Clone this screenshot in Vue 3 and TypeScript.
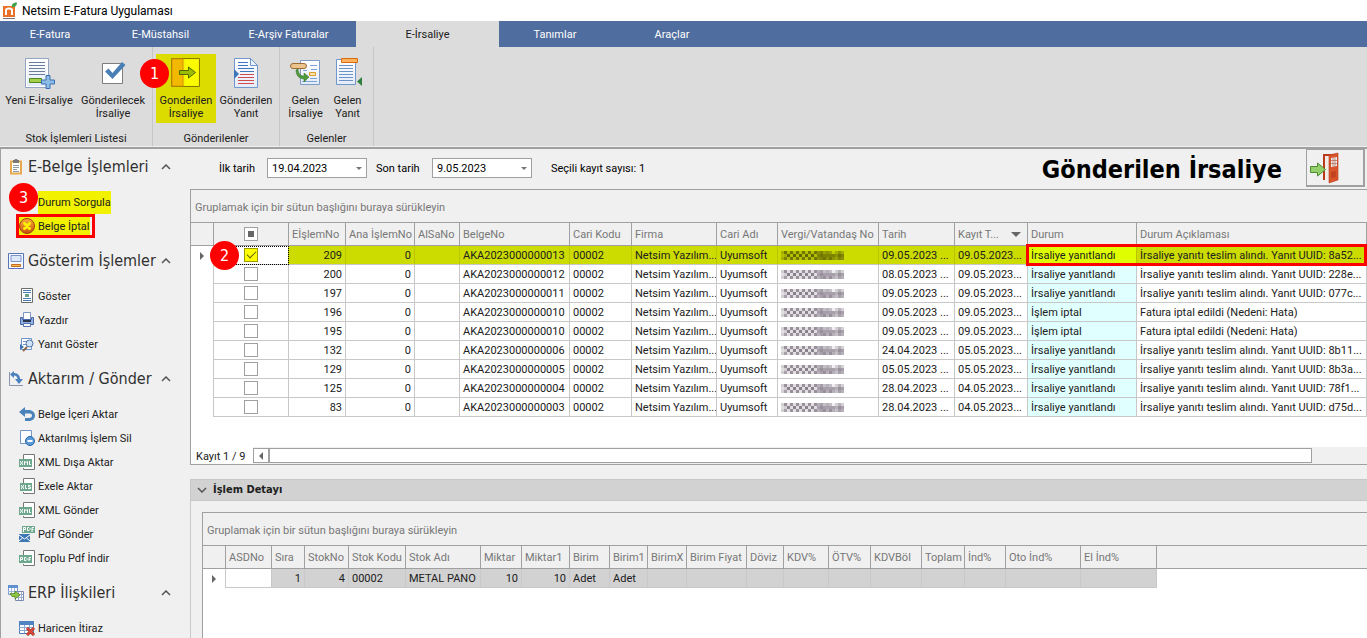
<script setup lang="ts">
import { ref } from 'vue'

interface RibbonItem { icon: string; lines: string[]; hot?: boolean }
interface RibbonGroup { title: string; cls: string; items: RibbonItem[] }
interface NavItem { icon: string; label: string; cls?: string }
interface NavGroup { icon: string; title: string; items: NavItem[] }
interface Doc {
  no: number; belge: string; tarih: string; kayit: string; durum: string; aciklama: string
}

const tabs = ['E-Fatura', 'E-Müstahsil', 'E-Arşiv Faturalar', 'E-İrsaliye', 'Tanımlar', 'Araçlar']
const activeTab = ref('E-İrsaliye')

const ribbon: RibbonGroup[] = [
  { title: 'Stok İşlemleri Listesi', cls: 'g1', items: [
    { icon: 'i-new', lines: ['Yeni E-İrsaliye'] },
    { icon: 'i-check', lines: ['Gönderilecek', 'İrsaliye'] },
  ] },
  { title: 'Gönderilenler', cls: 'g2', items: [
    { icon: 'i-sent', lines: ['Gonderilen', 'İrsaliye'], hot: true },
    { icon: 'i-reply', lines: ['Gönderilen', 'Yanıt'] },
  ] },
  { title: 'Gelenler', cls: 'g3', items: [
    { icon: 'i-inbox', lines: ['Gelen', 'İrsaliye'] },
    { icon: 'i-inreply', lines: ['Gelen', 'Yanıt'] },
  ] },
]

const nav: NavGroup[] = [
  { icon: 'n-clip', title: 'E-Belge İşlemleri', items: [
    { icon: 'n-blank', label: 'Durum Sorgula', cls: 'query' },
    { icon: 'n-cancel', label: 'Belge İptal', cls: 'cancel' },
  ] },
  { icon: 'n-screen', title: 'Gösterim İşlemler', items: [
    { icon: 'n-show', label: 'Göster' },
    { icon: 'n-print', label: 'Yazdır' },
    { icon: 'n-find', label: 'Yanıt Göster' },
  ] },
  { icon: 'n-transfer', title: 'Aktarım / Gönder', items: [
    { icon: 'n-undo', label: 'Belge İçeri Aktar' },
    { icon: 'n-remove', label: 'Aktarılmış İşlem Sil' },
    { icon: 'n-xml', label: 'XML Dışa Aktar' },
    { icon: 'n-xls', label: 'Exele Aktar' },
    { icon: 'n-xml', label: 'XML Gönder' },
    { icon: 'n-pdfmail', label: 'Pdf Gönder' },
    { icon: 'n-pdf', label: 'Toplu Pdf İndir' },
  ] },
  { icon: 'n-erp', title: 'ERP İlişkileri', items: [
    { icon: 'n-objection', label: 'Haricen İtiraz' },
  ] },
]

const yanit = 'İrsaliye yanıtlandı'
const teslim = (id: string) => `İrsaliye yanıtı teslim alındı. Yanıt UUID: ${id}...`
const hata = 'Fatura iptal edildi (Nedeni: Hata)'
const docs: Doc[] = [
  { no: 209, belge: 'AKA2023000000013', tarih: '09.05.2023 ...', kayit: '09.05.2023...', durum: yanit, aciklama: teslim('8a52') },
  { no: 200, belge: 'AKA2023000000012', tarih: '08.05.2023 ...', kayit: '09.05.2023...', durum: yanit, aciklama: teslim('228e') },
  { no: 197, belge: 'AKA2023000000011', tarih: '09.05.2023 ...', kayit: '09.05.2023...', durum: yanit, aciklama: teslim('077c') },
  { no: 196, belge: 'AKA2023000000010', tarih: '09.05.2023 ...', kayit: '09.05.2023...', durum: 'İşlem iptal', aciklama: hata },
  { no: 195, belge: 'AKA2023000000010', tarih: '09.05.2023 ...', kayit: '09.05.2023...', durum: 'İşlem iptal', aciklama: hata },
  { no: 132, belge: 'AKA2023000000006', tarih: '24.04.2023 ...', kayit: '05.05.2023...', durum: yanit, aciklama: teslim('8b11') },
  { no: 129, belge: 'AKA2023000000005', tarih: '05.05.2023 ...', kayit: '05.05.2023...', durum: yanit, aciklama: teslim('8b3a') },
  { no: 125, belge: 'AKA2023000000004', tarih: '28.04.2023 ...', kayit: '04.05.2023...', durum: yanit, aciklama: teslim('78f1') },
  { no: 83, belge: 'AKA2023000000003', tarih: '28.04.2023 ...', kayit: '04.05.2023...', durum: yanit, aciklama: teslim('d75d') },
]
const checked = ref<number[]>([209])

/* Censored tax number: three rows of cells, each digit a darkness from 0 to 9. */
const mosaic = ['372727272727564541353', '238282828282676666576', '362727272727567575465']
const cells = mosaic.flatMap((row, y) =>
  row.split('').map((c, x) => ({ x: x * 3, y: y * 3, o: Number(c) / 10 })))

const detailCols: { name: string; w: number; value?: string; num?: boolean }[] = [
  { name: 'ASDNo', w: 46 }, { name: 'Sıra', w: 33, value: '1', num: true },
  { name: 'StokNo', w: 44, value: '4', num: true }, { name: 'Stok Kodu', w: 57, value: '00002' },
  { name: 'Stok Adı', w: 75, value: 'METAL PANO' }, { name: 'Miktar', w: 41, value: '10', num: true },
  { name: 'Miktar1', w: 48, value: '10', num: true }, { name: 'Birim', w: 40, value: 'Adet' },
  { name: 'Birim1', w: 38, value: 'Adet' }, { name: 'BirimX', w: 39 }, { name: 'Birim Fiyat', w: 60 },
  { name: 'Döviz', w: 37 }, { name: 'KDV%', w: 45 }, { name: 'ÖTV%', w: 42 }, { name: 'KDVBöl', w: 51 },
  { name: 'Toplam', w: 43 }, { name: 'İnd%', w: 41 }, { name: 'Oto İnd%', w: 75 }, { name: 'El İnd%', w: 76 },
]
</script>

<template>
  <div class="app">
    <svg class="sprite" aria-hidden="true">
      <defs>
        <linearGradient id="paper" x1="0" y1="0" x2="0" y2="1"><stop offset="0" stop-color="#fff" /><stop offset="1" stop-color="#e3ebf8" /></linearGradient>
        <linearGradient id="orange" x1="0" y1="0" x2="0" y2="1"><stop offset="0" stop-color="#f7b03a" /><stop offset="1" stop-color="#c94f10" /></linearGradient>
      </defs>
      <symbol id="i-new" viewBox="0 0 32 32">
        <path d="M2.500 1.500h23v29h-23z" fill="#fff" stroke="#93a5c2" /><path d="M4 3h20v26H4z" fill="url(#paper)" />
        <path d="M6 5.500h16M6 8.500h16M6 11.500h16M6 14.500h16M6 17.500h16" stroke="#6d7d9c" />
        <path d="M6.500 21.500h12v4h-12z" fill="#a5cf4a" stroke="#4f8a22" />
        <path d="M23 18.500h4v4.500h4.500v4H27v4.500h-4V27h-4.500v-4H23z" fill="#8cbbe6" stroke="#3a71b0" />
      </symbol>
      <symbol id="i-check" viewBox="0 0 32 32">
        <path d="M5.500 6.500h20v20h-20z" fill="#fff" stroke="#7d7d7d" />
        <path d="M8 14.500l3.500-3 4 4.500L25 5l3.500 3L15.500 22z" fill="#4a7fb5" />
      </symbol>
      <symbol id="i-sent" viewBox="0 0 32 32">
        <path d="M1.500 1.500h28v28h-28z" fill="#f4f400" stroke="#8a7a00" />
        <path d="M2 2h11v27H2z" fill="#f3b800" stroke="#d79000" /><path d="M15 3h13v25H15z" fill="#fafa00" />
        <path d="M9.500 13.500h9V10l7 5.500-7 5.500v-3.500h-9z" fill="#9dbb00" stroke="#4d6a00" />
      </symbol>
      <symbol id="i-reply" viewBox="0 0 32 32">
        <path d="M4.500 1.500h16l7 7v22h-23z" fill="url(#paper)" stroke="#6f97cc" /><path d="M20.500 1.500v7h7z" fill="#e8f1fd" stroke="#6f97cc" />
        <path d="M8 5.500h10M8 8.500h10M8 11.500h16M10 14.500h14" stroke="#3f76bd" />
        <path d="M10 17.500h14M8 20.500h16M8 23.500h16M8 26.500h16" stroke="#d04a4a" /><path d="M4 12l5 5-5 5z" fill="#3c76b6" />
      </symbol>
      <symbol id="i-inbox" viewBox="0 0 32 32">
        <path d="M10.500 3.500h19v24h-19z" fill="url(#paper)" stroke="#7f9cc9" />
        <path d="M20 8.500h7M13 13.500h4M21 12.500h6M20 21.500h7M12 24.500h15" stroke="#7ba2d2" />
        <path d="M19.500 15.500h6v3h-6z" fill="#ffe5ae" stroke="#e0992b" />
        <rect x="0.500" y="6.500" width="16" height="5" rx="2.500" fill="#eac48c" stroke="#9c6c32" />
        <path d="M8 12c0 5 3 7 6 7v-3l5 4-5 5v-3c-5 0-8-4-8-9z" fill="#4f9a3c" stroke="#2d6a24" stroke-width=".5" />
      </symbol>
      <symbol id="i-inreply" viewBox="0 0 32 32">
        <path d="M4.500 2.500h19v25h-19z" fill="url(#paper)" stroke="#6f97cc" />
        <path d="M7 8.500h14M7 11.500h14M7 14.500h14M7 17.500h14M7 20.500h14M7 23.500h14" stroke="#6b93c6" />
        <path d="M9.500 1.500h16v4h-16z" fill="#fbb25c" stroke="#d86a10" /><path d="M30 20v9l-5-4.500z" fill="#2f8040" />
      </symbol>
      <symbol id="n-blank" viewBox="0 0 16 16"><circle cx="8" cy="8" r="5" fill="#c9c900" /></symbol>
      <symbol id="n-clip" viewBox="0 0 16 16">
        <path d="M3 2.500h10v12H3z" fill="#fff" stroke="#e7a950" stroke-width="2" /><path d="M5 1h1.500l.5-1h2l.5 1H11v3H5z" fill="#777" />
        <path d="M5 6.500h6M5 8.500h6M5 10.500h4M5 12.500h6" stroke="#8b99a8" />
      </symbol>
      <symbol id="n-cancel" viewBox="0 0 16 16">
        <circle cx="8" cy="8" r="7.500" fill="url(#orange)" stroke="#a83c08" />
        <path d="M5.500 5.500l5 5M10.500 5.500l-5 5" stroke="#fff200" stroke-width="3" stroke-linecap="round" />
      </symbol>
      <symbol id="n-screen" viewBox="0 0 16 16">
        <path d="M.500.500h15v15H.500z" fill="#f4f7ff" stroke="#5a74b8" /><path d="M3 2.500h10v6H3z" fill="#dde9fb" stroke="#7b94c9" />
        <path d="M3.500 11.500h9v2h-9z" fill="#f5b75c" stroke="#c66d1b" />
      </symbol>
      <symbol id="n-show" viewBox="0 0 16 16">
        <path d="M2.500.500h11v14h-11z" fill="#fff" stroke="#6d6d6d" />
        <path d="M4 2.500h8M4 4.500h8M4 12.500h8M4 10.500h8" stroke="#4a7fb5" /><path d="M6 6h4v3H6z" fill="#6ba38a" />
      </symbol>
      <symbol id="n-print" viewBox="0 0 16 16">
        <path d="M4.500.500h7v7h-7z" fill="#fff" stroke="#7f95bf" /><path d="M1.500 5.500h2v2h9v-2h2v7h-13z" fill="#8fb0e0" stroke="#4a67a6" />
        <path d="M4 8h8v2H4z" fill="#29344e" /><path d="M4.500 11.500h7v3h-7z" fill="#fff" stroke="#5774b2" />
      </symbol>
      <symbol id="n-find" viewBox="0 0 16 16">
        <path d="M2.500 2.500h10v11h-10z" fill="#fff" stroke="#6a95cc" /><path d="M4 5.500h4M4 8.500h3" stroke="#6a95cc" /><path d="M1 8l4 3-4 3z" fill="#3c76b6" />
        <path d="M8 11l-4 4" stroke="#856344" stroke-width="2" /><circle cx="10.500" cy="7.500" r="3.500" fill="#cfe4fa" stroke="#50719b" />
      </symbol>
      <symbol id="n-transfer" viewBox="0 0 16 16">
        <path d="M1.500 1v13.500H15" fill="none" stroke="#8795ad" /><path d="M6 0v2c4 0 6 3 6 6h3l-4 5-4-5h2.500c0-2-1.500-3.500-3.500-3.500V7L2 3.500z" fill="#4a80bd" />
      </symbol>
      <symbol id="n-undo" viewBox="0 0 16 16">
        <path d="M0 6l6-5v3h3.500C13.500 4 16 6.500 16 9.500S13.500 15 10 15H6v-3h4c2 0 3-1 3-2.500S12 7.500 9.500 7.500H6V11z" fill="#4a83bb" />
      </symbol>
      <symbol id="n-remove" viewBox="0 0 16 16">
        <path d="M1.500.500h11v13h-11z" fill="#fafcff" stroke="#7495c8" /><circle cx="11" cy="11" r="4.500" fill="#5a9ad8" stroke="#2d66a3" /><path d="M8.500 11h5" stroke="#fff" stroke-width="2" />
      </symbol>
      <symbol id="n-xml" viewBox="0 0 16 16">
        <path d="M4.500 5V.500h11v15h-11V14" fill="#fff" stroke="#777" /><path d="M0 5h13v8H0z" fill="#6ca78e" />
        <path d="M1.500 7v1l2 2v1M3.500 7v1l-2 2v1M5.500 11V7.500l1.500 1 1.500-1V11M10.500 7v3.500H12" fill="none" stroke="#fff" />
      </symbol>
      <symbol id="n-xls" viewBox="0 0 16 16">
        <path d="M4.500 5V.500h11v15h-11V14" fill="#fff" stroke="#777" /><path d="M1 5h12v8H1z" fill="#6ca78e" />
        <path d="M2.500 7v1l2 2v1M4.500 7v1l-2 2v1M6.500 7v3.500H8M11.500 7.500H9.500V9h2v1.500H9" fill="none" stroke="#fff" />
      </symbol>
      <symbol id="n-pdf" viewBox="0 0 16 16">
        <path d="M4.500 5V.500h11v15h-11V14" fill="#fff" stroke="#777" /><path d="M0 5h13v8H0z" fill="#6ca78e" />
        <path d="M1.500 11V7.500h2v2h-2M5.500 7.500H7l1 1v1l-1 1H5.500zM10 11V7.500h2M10 9.500h1.500" fill="none" stroke="#fff" />
      </symbol>
      <symbol id="n-pdfmail" viewBox="0 0 16 16">
        <path d="M3 0h13v7H3z" fill="#6ca78e" /><path d="M4.500 6V1.500h2v2h-2M8.500 1.500H10l1 1v1l-1 1H8.500zM13 6V1.500h2M13 3.500h1.500" fill="none" stroke="#fff" />
        <path d="M0 8h11v8H0z" fill="#3f77b4" /><path d="M0 9l5.500 4L11 9M0 15l3.500-3M11 15l-3.500-3" fill="none" stroke="#fff" />
      </symbol>
      <symbol id="n-erp" viewBox="0 0 16 16">
        <path d="M.500.500h9v9h-9z" fill="#fff" stroke="#7a9bd0" /><path d="M0 0h10v3H0z" fill="#5f90cf" /><path d="M3.500 3v7M6.500 3v7M0 6.500h10" stroke="#9bb5de" />
        <path d="M7.500 6.500h8v9h-8z" fill="#fff" stroke="#7a89b0" /><path d="M10.500 7v8M13.500 7v8M8 9.500h7M8 12.500h7" stroke="#9bacd0" />
        <path d="M2 8.500h5V6l5 4-5 4v-2.500H4z" fill="#8dc63f" stroke="#4a7f1d" stroke-width=".7" />
      </symbol>
      <symbol id="n-objection" viewBox="0 0 16 16">
        <path d="M.500 1.500h14v12H.500z" fill="#fff" stroke="#4a79b5" /><path d="M0 1h15v4H0z" fill="#4f83c2" /><path d="M0 7.500h15M0 10.500h15M5.500 5v8M10.500 5v8" stroke="#87a9d4" />
        <path d="M8 8l7 7M15 8l-7 7" stroke="#a8281c" stroke-width="3" /><path d="M8 8l7 7M15 8l-7 7" stroke="#e0503c" stroke-width="1.500" />
      </symbol>
    </svg>

    <header class="titlebar">
      <svg class="logo" viewBox="0 0 15 18" aria-hidden="true">
        <path d="M1 4h12v11H1z" fill="#ea7125" /><path d="M4 13V8c0-2 6-2 6 0v5" fill="none" stroke="#fff" stroke-width="2" />
        <path d="M10 5c-.5-3 1-4.500 5-4.500 0 3-1.500 5-5 4.500z" fill="#3fa34d" /><path d="M1 16.500h12" stroke="#777" />
      </svg>
      <span>Netsim E-Fatura Uygulaması</span>
    </header>

    <nav class="tabs">
      <button v-for="t in tabs" :key="t" type="button" :class="{ active: t === activeTab }" @click="activeTab = t">{{ t }}</button>
    </nav>

    <div class="ribbon">
      <section v-for="g in ribbon" :key="g.title" class="rgroup" :class="g.cls">
        <div class="ritems">
          <button v-for="it in g.items" :key="it.icon" type="button" class="ritem" :class="{ hot: it.hot }">
            <svg class="ricon" aria-hidden="true"><use :href="'#' + it.icon" /></svg>
            <span v-for="l in it.lines" :key="l">{{ l }}</span>
            <span v-if="it.hot" class="badge b1">1</span>
          </button>
        </div>
        <h2>{{ g.title }}</h2>
      </section>
    </div>

    <div class="body">
      <aside class="side">
        <section v-for="g in nav" :key="g.title">
          <button type="button" class="shead">
            <svg class="nicon" aria-hidden="true"><use :href="'#' + g.icon" /></svg>
            <span>{{ g.title }}</span>
            <svg class="chev" viewBox="0 0 10 6" aria-hidden="true"><path d="M1 5l4-4 4 4" /></svg>
          </button>
          <ul>
            <li v-for="it in g.items" :key="it.label" :class="it.cls">
              <a href="#"><svg class="nicon" aria-hidden="true"><use :href="'#' + it.icon" /></svg><span>{{ it.label }}</span></a>
              <span v-if="it.cls === 'query'" class="badge b3">3</span>
            </li>
          </ul>
        </section>
      </aside>

      <main class="main">
        <div class="filter">
          <label for="d1">İlk tarih</label>
          <span class="date"><input id="d1" type="text" value="19.04.2023" /><button type="button" aria-label="İlk tarih seç"></button></span>
          <label for="d2">Son tarih</label>
          <span class="date"><input id="d2" type="text" value="9.05.2023" /><button type="button" aria-label="Son tarih seç"></button></span>
          <span class="count">Seçili kayıt sayısı: 1</span>
          <h1>Gönderilen İrsaliye</h1>
          <button type="button" class="exit" aria-label="Çıkış">
            <svg viewBox="0 0 32 32" aria-hidden="true">
              <path d="M13 2h14v26H13z" fill="#b9391b" /><path d="M15 4h6v24h-6z" fill="#f4ebe7" />
              <path d="M19 3l9-2v27l-9 3z" fill="#d9532b" stroke="#b13c1a" stroke-width=".6" /><path d="M21 6l6-1v9l-6 1z" fill="#e9eef2" />
              <path d="M23 5.500v9M25 5.500v9M21 8.500h6M21 11.500h6" stroke="#b9654b" stroke-width=".7" /><path d="M21 20l5-1v6l-5 1.500z" fill="#c2431f" />
              <path d="M.500 14.500h7V11l8 6.500-8 6.500v-3.500h-7z" fill="#93cf6a" stroke="#4d8a32" />
            </svg>
          </button>
        </div>

        <section class="grid">
          <p class="group">Gruplamak için bir sütun başlığını buraya sürükleyin</p>
          <div class="tbl">
            <table>
              <colgroup>
                <col class="w23" /><col class="w75" /><col class="w57" /><col class="w69" /><col class="w45" /><col class="w110" /><col class="w62" />
                <col class="w85" /><col class="w61" /><col class="w101" /><col class="w76" /><col class="w73" /><col class="w109" /><col />
              </colgroup>
              <thead>
                <tr>
                  <th></th>
                  <th class="c"><input type="checkbox" class="partial" aria-label="Tümünü seç" /></th>
                  <th>EİşlemNo</th><th>Ana İşlemNo</th><th>AlSaNo</th><th>BelgeNo</th><th>Cari Kodu</th><th>Firma</th><th>Cari Adı</th>
                  <th>Vergi/Vatandaş No</th><th>Tarih</th><th><span class="sorted">Kayıt T...<i></i></span></th><th>Durum</th><th>Durum Açıklaması</th>
                </tr>
              </thead>
              <tbody>
                <tr v-for="(d, i) in docs" :key="d.no" :class="{ sel: i === 0 }">
                  <td class="ind"><i v-if="i === 0" class="ptr"></i></td>
                  <td class="c chk"><input v-model="checked" type="checkbox" :value="d.no" :aria-label="'Kayıt ' + d.no" /><span v-if="i === 0" class="badge b2">2</span></td>
                  <td class="r">{{ d.no }}</td><td class="r">0</td><td></td><td>{{ d.belge }}</td><td>00002</td><td>Netsim Yazılım...</td><td>Uyumsoft</td>
                  <td class="tax">
                    <svg viewBox="0 0 63 9" aria-hidden="true"><rect v-for="(c, k) in cells" :key="k" :x="c.x" :y="c.y" width="3" height="3" :opacity="c.o" /></svg>
                  </td>
                  <td>{{ d.tarih }}</td><td>{{ d.kayit }}</td><td class="durum">{{ d.durum }}</td><td class="desc">{{ d.aciklama }}</td>
                </tr>
              </tbody>
            </table>
          </div>
          <footer class="foot">
            <span>Kayıt 1 / 9</span>
            <div class="scroll"><button type="button" aria-label="Sola kaydır"></button><div class="thumb"></div></div>
          </footer>
        </section>

        <section class="detail">
          <button type="button" class="dhead">
            <svg class="chev" viewBox="0 0 10 6" aria-hidden="true"><path d="M1 1l4 4 4-4" /></svg>İşlem Detayı
          </button>
          <div class="dgrid">
            <p class="group">Gruplamak için bir sütun başlığını buraya sürükleyin</p>
            <div class="dstrip">
              <table>
                <thead>
                  <tr><th class="w23"></th><th v-for="c in detailCols" :key="c.name" :style="{ width: c.w + 'px' }">{{ c.name }}</th></tr>
                </thead>
                <tbody>
                  <tr><td class="ind"><i class="ptr"></i></td><td v-for="c in detailCols" :key="c.name" :class="{ r: c.num }">{{ c.value }}</td></tr>
                </tbody>
              </table>
            </div>
          </div>
        </section>
      </main>
    </div>
  </div>
</template>

<style>
body { margin: 0; }
</style>

<style scoped>
.app {
  height: 100vh; overflow: hidden; display: flex; flex-direction: column; background: #f0f0f0; color: #202020;
  font: 11px/13px Roboto, "Noto Sans", sans-serif;
}
.app * { box-sizing: border-box; }
button, input { font: inherit; color: inherit; margin: 0; padding: 0; border: 0; background: none; }
h1, h2, p, ul { margin: 0; padding: 0; font-weight: normal; }
.sprite { position: absolute; width: 0; height: 0; }

.titlebar { height: 21px; flex: none; display: flex; align-items: center; gap: 5px; padding-left: 2px; background: #fff; color: #000; font: 12px/20px Roboto, "Noto Sans", sans-serif; }
.logo { width: 15px; height: 18px; }

.tabs { height: 26px; flex: none; display: grid; grid-template-columns: 100px 121px 135px 143px 112px 122px; background: #4f6d9e; color: #fff; }
.tabs .active { background: #dcdcdc; color: #202020; }

.ribbon { height: 100px; flex: none; display: flex; background: #dcdcdc; border-bottom: 1px solid #f0f0f0; }
.rgroup { display: flex; flex-direction: column; border-right: 1px solid #c6c6c6; }
.g1 { width: 153px; }
.g2 { width: 127px; }
.g3 { width: 94px; }
.ritems { flex: 1; display: flex; justify-content: center; padding-top: 7px; }
.ritem { position: relative; display: flex; flex-direction: column; align-items: center; height: 69px; padding: 3px 4px 0; white-space: nowrap; }
.g1 .ritem { width: 74px; }
.g2 .ritem { width: 60px; }
.g3 .ritem { width: 42px; }
.ritem.hot { background: #dcdc00; }
.ricon { width: 32px; height: 32px; margin-bottom: 5px; flex: none; }
.rgroup h2 { height: 16px; font-size: 11px; line-height: 17px; text-align: center; }

.badge { position: absolute; z-index: 2; width: 29px; height: 29px; border-radius: 50%; background: #f00; color: #fff; font: 16px/29px "DejaVu Sans Condensed", sans-serif; text-align: center; }
.b1 { left: -16px; top: 5px; }
.b2 { left: -4px; top: -5px; }
.b3 { left: 8px; top: -7px; }

.body { flex: 1; min-height: 0; display: flex; border-top: 2px solid #a0a0a0; border-left: 1px solid #a0a0a0; }
.side { width: 189px; flex: none; padding-top: 6px; }
.shead { width: 100%; height: 24px; display: flex; align-items: center; padding-left: 7px; text-align: left; font: 16px/24px "DejaVu Sans Condensed", sans-serif; color: #303030; }
.shead span { width: 129px; margin: 0 4px; white-space: nowrap; }
.nicon { width: 16px; height: 16px; flex: none; }
.chev { width: 10px; height: 6px; flex: none; fill: none; stroke: #555; stroke-width: 1.500; }
.side ul { list-style: none; padding: 11px 0; }
.side li { position: relative; height: 24px; padding-left: 18px; display: flex; align-items: center; }
.side a { display: flex; align-items: center; gap: 3px; height: 22px; color: inherit; text-decoration: none; }
.query a span { height: 23px; line-height: 23px; background: #f2f200; }
.side .cancel { padding-left: 15px; }
.cancel a { height: 24px; border: 3px solid #f00; padding-right: 2px; background: #f2f200; background-clip: content-box; }

.main { flex: 1; min-width: 0; display: flex; flex-direction: column; }
.filter { height: 40px; flex: none; display: flex; align-items: center; padding: 0 2px 2px 29px; color: #000; }
.filter label { width: 48px; }
.date + label { width: 56px; margin-left: 9px; }
.date { width: 100px; height: 20px; display: flex; align-items: center; background: #fff; border: 1px solid #a0a0a0; }
.date input { flex: 1; min-width: 0; padding-left: 4px; outline: 0; }
.date button { width: 15px; height: 18px; display: grid; place-items: center; }
.date button::after { content: ""; border: 3px solid transparent; border-top-color: #777; border-bottom: 0; }
.count { margin-left: 19px; }
.filter h1 { margin-left: auto; padding-top: 4px; font: bold 25px/34px "DejaVu Sans Condensed", sans-serif; }
.exit { width: 59px; height: 38px; margin-left: 24px; border: 1px solid #a0a0a0; border-bottom-width: 2px; border-right-width: 2px; text-align: left; }
.exit svg { display: block; width: 32px; height: 32px; margin-left: 3px; }

.grid { height: 276px; flex: none; display: flex; flex-direction: column; border: 1px solid #a0a0a0; border-right: 0; background: #fff; }
.group { height: 33px; padding: 0 4px; background: #f0f0f0; border-bottom: 1px solid #a0a0a0; color: #777; line-height: 35px; }
table { border-collapse: separate; border-spacing: 0; table-layout: fixed; }
.tbl { flex: 1; }
.tbl table { width: 100%; }
.w23 { width: 23px; } .w45 { width: 45px; } .w57 { width: 57px; } .w61 { width: 61px; } .w62 { width: 62px; } .w69 { width: 69px; }
.w73 { width: 73px; } .w75 { width: 75px; } .w76 { width: 76px; } .w85 { width: 85px; } .w101 { width: 101px; } .w109 { width: 109px; } .w110 { width: 110px; }
th, td { padding: 0 0 0 3px; overflow: hidden; white-space: nowrap; text-align: left; font-weight: normal; }
th { height: 23px; background: #f0f0f0; color: #777; border-right: 1px solid #a0a0a0; border-bottom: 1px solid #a0a0a0; }
td { height: 19px; border-right: 1px solid #c8c8c8; border-bottom: 1px solid #c8c8c8; }
.c { padding: 0; text-align: center; }
.r { padding-right: 3px; text-align: right; }
.ind { border-bottom: 0; padding: 0; }
.ptr { display: block; width: 0; margin-left: 9px; border: 4px solid transparent; border-left-color: #666; border-right: 0; }
.sorted { display: flex; align-items: center; justify-content: space-between; padding-right: 6px; }
.sorted i { border: 5px solid transparent; border-top-color: #666; border-bottom: 0; }
input[type="checkbox"] { appearance: none; display: inline-grid; place-items: center; width: 14px; height: 14px; border: 1px solid #a0a0a0; background: #fff; vertical-align: middle; }
.partial::after { content: ""; width: 6px; height: 6px; background: #666; }
input[type="checkbox"]:checked { background: #ff0; border-color: #9a9a00; }
input[type="checkbox"]:checked::after { content: ""; width: 8px; height: 4px; margin-bottom: 3px; border-left: 1px solid #606000; border-bottom: 1px solid #606000; rotate: -45deg; }
.durum { background: #e0ffff; }
.tax svg { display: block; width: 63px; height: 9px; fill: #6d6172; }
.sel td { background: #cddc00; border-right-color: #b9c600; }
.sel .ind { background: #fff; border-color: #fff; }
.sel td.chk { position: relative; overflow: visible; background: #fff; outline: 1px dotted #000; outline-offset: -1px; }
.sel .tax svg { fill: #4a4a00; }
.sel .durum { background: #dfff00; }
.sel .durum, .sel .desc { position: relative; overflow: visible; }
.sel .durum::after, .sel .desc::after { content: ""; position: absolute; inset: -2px -1px -2px -2px; border: 3px solid #f00; border-right: 0; }
.sel .desc::after { left: 0; border-right: 3px solid #f00; border-left: 0; }

.foot { height: 17px; flex: none; display: flex; align-items: center; }
.foot span { width: 62px; padding: 1px 0 0 5px; }
.scroll { flex: 1; height: 17px; padding: 1px 55px 1px 0; display: flex; background: #f0f0f0; }
.scroll button { width: 16px; display: grid; place-items: center; background: #fff; border: 1px solid #a0a0a0; }
.scroll button::after { content: ""; border: 4px solid transparent; border-right-color: #666; border-left: 0; }
.thumb { flex: 1; background: #fff; border: 1px solid #a0a0a0; }

.detail { flex: 1; min-height: 0; margin-top: 14px; display: flex; flex-direction: column; border-left: 1px solid #c8c8c8; }
.dhead { height: 22px; flex: none; display: flex; align-items: center; gap: 6px; padding-left: 6px; background: #d2d2d2; border-top: 1px solid #c8c8c8; border-bottom: 1px solid #c8c8c8; font: bold 11px/20px "DejaVu Sans Condensed", sans-serif; }
.dgrid { flex: 1; margin: 11px 0 0 11px; border: 1px solid #a0a0a0; border-width: 1px 0 0 1px; background: #fff; }
.dstrip { background: linear-gradient(#f0f0f0 22px, #a0a0a0 22px, #a0a0a0 23px, #fff 23px); }
.dgrid table { width: 954px; }
.dgrid td { background: #d2d2d2; }
.dgrid td.ind, .dgrid .ind + td { background: #fff; }
</style>
